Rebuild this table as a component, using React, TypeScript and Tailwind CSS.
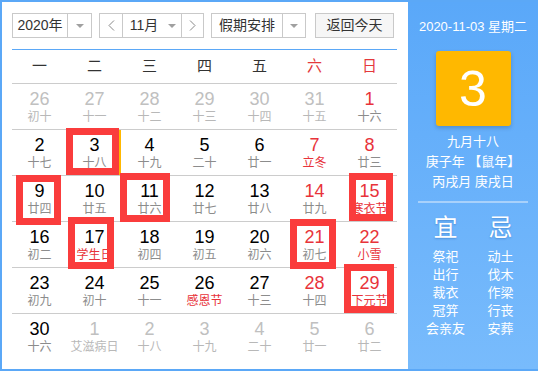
import React from "react";

type Day = { d: number; l: string; other?: boolean; red?: boolean; fest?: boolean };

const rows: Day[][] = [
  [
    { d: 26, l: "初十", other: true },
    { d: 27, l: "十一", other: true },
    { d: 28, l: "十二", other: true },
    { d: 29, l: "十三", other: true },
    { d: 30, l: "十四", other: true },
    { d: 31, l: "十五", other: true },
    { d: 1, l: "十六", red: true },
  ],
  [
    { d: 2, l: "十七" },
    { d: 3, l: "十八" },
    { d: 4, l: "十九" },
    { d: 5, l: "二十" },
    { d: 6, l: "廿一" },
    { d: 7, l: "立冬", red: true, fest: true },
    { d: 8, l: "廿三", red: true },
  ],
  [
    { d: 9, l: "廿四" },
    { d: 10, l: "廿五" },
    { d: 11, l: "廿六" },
    { d: 12, l: "廿七" },
    { d: 13, l: "廿八" },
    { d: 14, l: "廿九", red: true },
    { d: 15, l: "寒衣节", red: true, fest: true },
  ],
  [
    { d: 16, l: "初二" },
    { d: 17, l: "学生日", fest: true },
    { d: 18, l: "初四" },
    { d: 19, l: "初五" },
    { d: 20, l: "初六" },
    { d: 21, l: "初七", red: true },
    { d: 22, l: "小雪", red: true, fest: true },
  ],
  [
    { d: 23, l: "初九" },
    { d: 24, l: "初十" },
    { d: 25, l: "十一" },
    { d: 26, l: "感恩节", fest: true },
    { d: 27, l: "十三" },
    { d: 28, l: "十四", red: true },
    { d: 29, l: "下元节", red: true, fest: true },
  ],
  [
    { d: 30, l: "十六" },
    { d: 1, l: "艾滋病日", other: true },
    { d: 2, l: "十八", other: true },
    { d: 3, l: "十九", other: true },
    { d: 4, l: "二十", other: true },
    { d: 5, l: "廿一", other: true },
    { d: 6, l: "廿二", other: true },
  ],
];

const marks = [
  { x: 66, y: 128, w: 53, h: 47 },
  { x: 16, y: 175, w: 45, h: 50 },
  { x: 120, y: 173, w: 50, h: 49 },
  { x: 68, y: 217, w: 46, h: 52 },
  { x: 349, y: 173, w: 44, h: 48 },
  { x: 290, y: 219, w: 46, h: 50 },
  { x: 344, y: 264, w: 50, h: 49 },
];

const Tri = () => (
  <svg width="8" height="4" viewBox="0 0 8 4">
    <polygon points="0,0 8,0 4,4" fill="#a0a0a0" />
  </svg>
);

const Chev = ({ dir }: { dir: "l" | "r" }) => (
  <svg width="7" height="11" viewBox="0 0 7 11">
    <polyline
      points={dir === "l" ? "6,0.5 1,5.5 6,10.5" : "1,0.5 6,5.5 1,10.5"}
      fill="none"
      stroke="#888"
      strokeWidth="1"
    />
  </svg>
);

const yi = ["祭祀", "出行", "裁衣", "冠笄", "会亲友"];
const ji = ["动土", "伐木", "作梁", "行丧", "安葬"];

export default function App() {
  return (
    <div
      className="relative flex w-[538px] h-[371px] border-l-2 border-t-2 border-b-2 border-[#5ba8f7] overflow-hidden"
      style={{ fontFamily: '"Liberation Sans", Arial, "Noto Sans CJK SC", sans-serif' }}
    >
      {/* left */}
      <div className="w-[406px] shrink-0 bg-white pl-[10px] pt-[11px]">
        <div className="flex h-[25px] text-[14px] text-[#333]">
          <div className="flex w-[80px] border border-[#c9c9c9] bg-white">
            <div className="flex w-[54px] items-center justify-center">2020年</div>
            <div className="flex flex-1 items-center justify-center border-l border-[#c9c9c9]">
              <Tri />
            </div>
          </div>
          <div className="ml-[7px] flex w-[105px] border border-[#c9c9c9] bg-white">
            <div className="flex w-[22px] items-center justify-center">
              <Chev dir="l" />
            </div>
            <div className="flex w-[60px] items-center justify-center gap-[10px] border-l border-r border-[#c9c9c9] pl-[2px]">
              <span>11月</span>
              <Tri />
            </div>
            <div className="flex flex-1 items-center justify-center">
              <Chev dir="r" />
            </div>
          </div>
          <div className="ml-[7px] flex w-[95px] border border-[#c9c9c9] bg-white">
            <div className="flex w-[70px] items-center justify-center">假期安排</div>
            <div className="flex flex-1 items-center justify-center border-l border-[#c9c9c9]">
              <Tri />
            </div>
          </div>
          <div className="ml-[9px] flex w-[79px] items-center justify-center border border-[#c9c9c9] bg-[#f6f6f6]">
            返回今天
          </div>
        </div>
        <div className="mt-[11px] h-px w-[385px] bg-[#5ba8f7]" />
        <div className="w-[385px]">
          <div className="grid h-[33px] grid-cols-7 items-center text-center text-[15px] text-[#333]">
            {["一", "二", "三", "四", "五", "六", "日"].map((w, i) => (
              <div key={w} className={i >= 5 ? "text-[#e4393c]" : ""}>
                {w}
              </div>
            ))}
          </div>
          {rows.map((row, ri) => (
            <div key={ri} className="grid h-[46px] grid-cols-7 border-t border-[#cccccc]">
              {row.map((c, ci) => {
                const today = ri === 1 && ci === 1;
                const numColor = c.other ? "text-[#c0c0c0]" : c.red ? "text-[#e8333a]" : "text-black";
                const lunColor = c.fest && !c.other ? "text-[#e8333a]" : c.other ? "text-[#b8b8b8]" : "text-[#8c8c8c]";
                return (
                  <div key={ci} className="relative flex flex-col items-center pt-[5px]">
                    {today && (
                      <div className="absolute left-0 right-[1px] top-0 bottom-0 border-2 border-[#ffb800]" />
                    )}
                    <div className={`text-[18px] leading-[20px] ${numColor}`}>{c.d}</div>
                    <div className={`whitespace-nowrap text-[12px] leading-[16px] ${lunColor}`}>{c.l}</div>
                  </div>
                );
              })}
            </div>
          ))}
        </div>
      </div>

      {/* right panel */}
      <div className="flex flex-1 flex-col items-center bg-linear-to-b from-[#5aa8f9] to-[#78bbfc] pt-[15px] text-white">
        <div className="text-[13px] leading-[20px]">2020-11-03 星期二</div>
        <div className="mt-[14px] flex h-[75px] w-[75px] items-center justify-center rounded-[3px] bg-[#ffb800] text-[50px] leading-none shadow-[0_2px_4px_rgba(0,0,0,0.18)]">
          3
        </div>
        <div className="mt-[6px] text-[13px] leading-[20px]">九月十八</div>
        <div className="text-[13px] leading-[20px]">庚子年 【鼠年】</div>
        <div className="text-[13px] leading-[20px]">丙戌月 庚戌日</div>
        <div className="mt-[9px] h-[2px] w-[110px] bg-[#a8d1fb]" />
        <div className="mt-[11px] flex w-[110px]">
          <div className="flex w-[55px] flex-col items-center">
            <div className="text-[24px] leading-[28px] [text-shadow:0_1px_2px_rgba(0,60,140,0.3)]">宜</div>
            <div className="mt-[6px] flex flex-col items-center text-[13px] leading-[18px]">
              {yi.map((t) => (
                <div key={t}>{t}</div>
              ))}
            </div>
          </div>
          <div className="flex w-[55px] flex-col items-center">
            <div className="text-[24px] leading-[28px] [text-shadow:0_1px_2px_rgba(0,60,140,0.3)]">忌</div>
            <div className="mt-[6px] flex flex-col items-center text-[13px] leading-[18px]">
              {ji.map((t) => (
                <div key={t}>{t}</div>
              ))}
            </div>
          </div>
        </div>
      </div>

      {/* annotation boxes */}
      {marks.map((m, i) => (
        <div
          key={i}
          className="pointer-events-none absolute border-[7px] border-[#fa3c3c]"
          style={{ left: m.x - 2, top: m.y - 2, width: m.w, height: m.h }}
        />
      ))}
    </div>
  );
}
